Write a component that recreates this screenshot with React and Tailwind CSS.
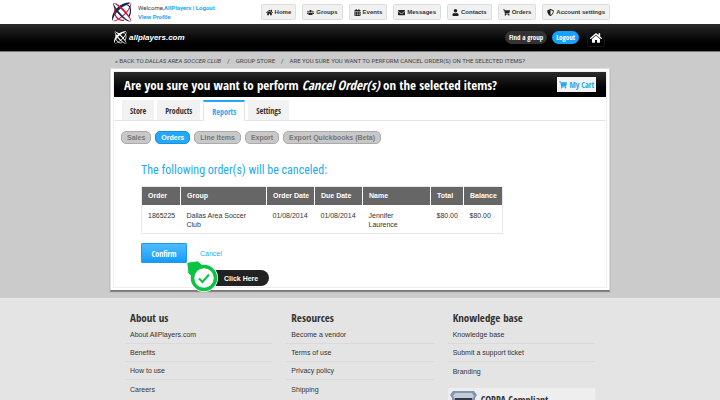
import { FaHome, FaUsers, FaCalendarAlt, FaEnvelope, FaUser, FaShoppingCart, FaShieldAlt } from "react-icons/fa";

const body = "font-['Liberation_Sans',Arial,sans-serif]";
const small = "font-['Roboto','Liberation_Sans',sans-serif]";
const narrow = "font-['Open_Sans_Condensed','Roboto_Condensed','Open_Sans',sans-serif]";
const narrowRegular = "font-['Roboto_Condensed','Open_Sans',sans-serif]";

const nav = [
  { label: "Home", Icon: FaHome },
  { label: "Groups", Icon: FaUsers },
  { label: "Events", Icon: FaCalendarAlt },
  { label: "Messages", Icon: FaEnvelope },
  { label: "Contacts", Icon: FaUser },
  { label: "Orders", Icon: FaShoppingCart },
  { label: "Account settings", Icon: FaShieldAlt },
];

const tabs = ["Store", "Products", "Reports", "Settings"];
const pills = ["Sales", "Orders", "Line Items", "Export", "Export Quickbooks (Beta)"];

const columns = [
  { title: "Order", width: "w-[39px]", value: "1865225" },
  { title: "Group", width: "w-[86px]", value: "Dallas Area Soccer Club" },
  { title: "Order Date", width: "w-[48px]", value: "01/08/2014" },
  { title: "Due Date", width: "w-[48px]", value: "01/08/2014" },
  { title: "Name", width: "w-[68px]", value: "Jennifer Laurence" },
  { title: "Total", width: "w-[33px]", value: "$80.00" },
  { title: "Balance", width: "w-[39px]", value: "$80.00" },
];

const footer = [
  { title: "About us", links: ["About AllPlayers.com", "Benefits", "How to use", "Careers"] },
  { title: "Resources", links: ["Become a vendor", "Terms of use", "Privacy policy", "Shipping"] },
  { title: "Knowledge base", links: ["Knowledge base", "Submit a support ticket", "Branding"] },
];

function Mark({ className, a, b }) {
  return (
    <svg viewBox="0 0 20 20" className={className} fill="none" aria-hidden="true">
      <path d="M19 1C17 -.5 10 1 5 6S-1 17 1 19c-.3-3 2-7 6-11S16 2 19 1z" fill={a} />
      <path d="M19 1c1 3-2 8-7 12.500S3 20 1 19c3-.5 6-2.500 10-6s7-8 8-12z" fill={b} />
      <path d="M1 1c3-.5 8 3 12 7.500S20 18 19 19.500c-1-3-4-6.500-8-10.500S4 2.500 1 1z" fill={b} />
      <path d="M1 1c0 4 3 8.500 7 12.500S16 20 19 19.500c-3-1-6.500-3.500-10-7.500S3 5 1 1z" fill={a} />
      <path d="M14 2.500c3 .5 4.500 3 4.500 6 0 2-.5 4-1.500 6" stroke={a} strokeWidth="1.200" />
      <path d="M3 6c-1 5 0 9 4 11.500 1.500.8 3 1 5 .8" stroke={b} strokeWidth="1.200" />
    </svg>
  );
}

function ClickMarker() {
  return (
    <div className="absolute left-[44px] top-[17px] flex w-[84px] items-end">
      <svg viewBox="0 0 34 34" className="z-10 size-[34px] shrink-0" fill="none" aria-hidden="true">
        <circle cx="19" cy="18" r="14" fill="#fff" />
        <path d="M2 2.500L13 1l6 6L8 18l-5-5z" fill="#08c440" stroke="#fff" strokeWidth=".6" />
        <circle cx="19" cy="18" r="11.500" fill="#fff" stroke="#08c440" strokeWidth="3.500" />
        <path d="M14 18.500l3.500 3.500 6.500-7.500" stroke="#08c440" strokeWidth="2" />
      </svg>
      <span className="-ml-4 mb-2 flex h-4 grow items-center rounded-r-full bg-[#222] pl-[21px] text-[7px] font-bold text-white shadow-[0_0_0_1px_#fff]">Click Here</span>
    </div>
  );
}

export default function App() {
  return (
    <div className={`${body} flex h-screen flex-col overflow-hidden bg-[#cbcbcb] text-[7px] leading-[9px] text-[#333]`}>
      <header>
        <div className="bg-white">
          <div className="mx-auto flex h-6 max-w-[500px] items-center">
            <Mark className="ml-0.5 size-5 shrink-0" a="#12294f" b="#cb1539" />
            <div className={`${small} ml-[6px] whitespace-nowrap text-[6px]`}>
              <p>Welcome,<a href="#me" className="font-bold text-[#22aaf7]">AllPlayers</a> | <a href="#logout" className="font-bold text-[#22aaf7]">Logout</a></p>
              <a href="#profile" className="block font-bold text-[#22aaf7]">View Profile</a>
            </div>
            <nav className="ml-auto flex gap-[6px]">
              {nav.map(({ label, Icon }) => (
                <a key={label} href="#nav" className="flex h-4 items-center gap-[2px] whitespace-nowrap rounded-[2px] border border-[#ddd] bg-[#f1f1f1] px-[4px] text-[6px] font-bold">
                  <Icon className="size-[7px] text-[#222]" />
                  {label}
                </a>
              ))}
            </nav>
          </div>
        </div>
        <div className="border-b border-[#777] bg-linear-to-b from-[#2c2c2c] to-black text-white">
          <div className="mx-auto flex h-[27px] max-w-[500px] items-center">
            <Mark className="ml-1 size-[13px]" a="#fff" b="#fff" />
            <span className="ml-[2px] text-[8px] font-bold italic">allplayers.com</span>
            <a href="#find" className={`${narrow} ml-auto rounded-full bg-[#333] px-1 py-[2px] text-[7px] font-bold`}>Find a group</a>
            <a href="#logout" className={`${narrow} ml-[5px] rounded-full bg-[#18a2ff] px-1 py-[2px] text-[7px] font-bold`}>Logout</a>
            <a href="#home" aria-label="Home" className="ml-2 mr-[5px] grid size-[18px] place-items-center rounded-[2px] border border-[#181818]"><FaHome className="size-3" /></a>
          </div>
        </div>
      </header>

      <main className="mx-auto w-full max-w-[500px] pb-[7px]">
        <nav className={`${small} flex h-4 items-center gap-[6px] whitespace-nowrap pl-[5px] text-[6px] uppercase text-[#444]`}>
          <a href="#back">« Back to <em>Dallas Area Soccer Club</em></a>
          <span>/</span>
          <a href="#store">Group Store</a>
          <span>/</span>
          <span>Are you sure you want to perform cancel order(s) on the selected items?</span>
        </nav>
        <section className="border border-[#ddd] border-b-[#777] bg-white p-[2px] shadow-[0_1px_1px_#888]">
          <div className="border border-[#eee]">
            <div className="flex h-[25px] items-center whitespace-nowrap bg-linear-to-b from-[#2c2c2c] to-black px-[10px] text-white">
              <h1 className={`${narrow} text-[13px] font-bold leading-4`}>Are you sure you want to perform <em>Cancel Order(s)</em> on the selected items?</h1>
              <a href="#cart" className={`${narrow} ml-auto flex h-[15px] items-center gap-[2px] bg-[#f4f4f4] px-[2px] text-[8px] font-bold text-[#22aaf7]`}><FaShoppingCart className="size-2" />My Cart</a>
            </div>
            <nav className={`${narrow} flex h-[24px] items-end gap-[3px] border-b border-[#e4e4e4] pl-2 text-[8px] font-bold`}>
              {tabs.map((t) => (
                <a key={t} href="#tab" className={t === "Reports" ? "-mb-px flex h-[21px] items-center border-x border-t-2 border-x-[#e4e4e4] border-t-[#1ea8fa] bg-white px-2 text-[#22aaf7]" : "flex h-5 items-center bg-[#f2f2f2] px-2"}>{t}</a>
              ))}
            </nav>
            <nav className="flex gap-1 pl-[7px] pt-[10px] text-[7px] font-bold text-[#777]">
              {pills.map((p) => (
                <a key={p} href="#report" className={p === "Orders" ? "rounded-[5px] border border-[#1590df] bg-[#24a8fb] px-[5px] py-px text-white" : "rounded-[5px] border border-[#aaa] bg-[#c8c8c8] px-[5px] py-px"}>{p}</a>
              ))}
            </nav>
            <div className="pb-6 pl-[27px] pt-[18px]">
              <h2 className={`${narrowRegular} text-[12px] leading-4 text-[#22aaf7]`}>The following order(s) will be canceled:</h2>
              <table className="mt-2 w-[362px] table-fixed border border-[#e8e8e8] text-left text-[7px]">
                <thead>
                  <tr className="h-[18px] bg-[#666] text-white">
                    {columns.map((c) => <th key={c.title} className={`${c.width} border-r border-white pl-[6px] font-bold last:border-r-0`}>{c.title}</th>)}
                  </tr>
                </thead>
                <tbody>
                  <tr className="h-[29px] align-top">
                    {columns.map((c) => <td key={c.title} className={c.title === "Group" || c.title === "Name" ? "pl-[6px] pr-4 pt-[6px]" : "pl-[6px] pt-[6px]"}>{c.value}</td>)}
                  </tr>
                </tbody>
              </table>
              <div className="relative mt-[9px] flex w-fit items-center gap-[13px]">
                <button className={`${narrow} h-5 w-[46px] rounded-[1px] border border-[#1c9bea] bg-linear-to-b from-[#4dbcff] to-[#0d9cff] text-[8px] font-bold text-white`}>Confirm</button>
                <a href="#cancel" className="text-[7px] text-[#22aaf7]">Cancel</a>
                <ClickMarker />
              </div>
            </div>
          </div>
        </section>
      </main>

      <footer className="grow bg-[#e4e4e4]">
        <div className="mx-auto grid max-w-[500px] grid-cols-3 gap-[14px] px-[15px] pt-3">
          {footer.map(({ title, links }) => (
            <div key={title}>
              <h3 className={`${narrow} pl-[5px] text-[11px] font-bold leading-4`}>{title}</h3>
              <ul>
                {links.map((l) => (
                  <li key={l} className="flex h-[18px] items-center border-b border-[#dadada] pl-[5px] last:border-b-0"><a href="#link">{l}</a></li>
                ))}
              </ul>
              {title === "Knowledge base" && (
                <div className="mt-2 flex gap-1 bg-[#eee] px-[2px] pt-[3px]">
                  <svg viewBox="0 0 27 20" className="h-5 w-[27px]" aria-hidden="true">
                    <path d="M3 0h21l3 4-2 3v13H2V7L0 4z" fill="#8494ae" />
                    <path d="M5 2h17l2 3-2 3v12H5V8L3 5z" fill="#c4ccda" />
                    <path d="M5 7h17v5H5z" fill="#333b48" />
                  </svg>
                  <p className={`${narrow} text-[10px] font-bold leading-[18px]`}>COPPA Compliant</p>
                </div>
              )}
            </div>
          ))}
        </div>
      </footer>
    </div>
  );
}
